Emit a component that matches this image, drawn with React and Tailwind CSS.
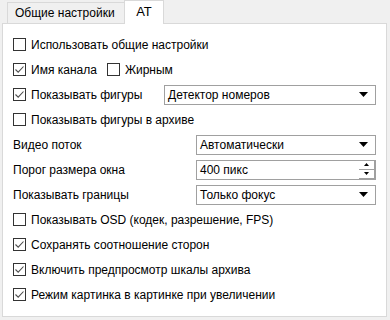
import React from 'react'

const font = { fontFamily: '"Segoe UI", "Liberation Sans", Arial, sans-serif' }

function Checkbox({ checked }) {
  return (
    <span className="flex h-[13px] w-[13px] shrink-0 items-center justify-center border border-[#333333] bg-white">
      {checked && (
        <svg width="11" height="11" viewBox="0 0 11 11">
          <path d="M1.5 5.5 L4.2 8.2 L9.5 2.5" fill="none" stroke="#4d4d4d" strokeWidth="1.1" />
        </svg>
      )}
    </span>
  )
}

function CheckRow({ checked, label, children }) {
  return (
    <div className="flex h-[25px] items-center">
      <Checkbox checked={checked} />
      <span className="ml-[5px]">{label}</span>
      {children}
    </div>
  )
}

function Arrow() {
  return (
    <svg width="9" height="5" viewBox="0 0 9 5" className="mr-[7px]">
      <path d="M0 0 H9 L4.5 5 Z" fill="#000" />
    </svg>
  )
}

function Select({ value, className = '' }) {
  return (
    <div className={`flex h-[20px] items-center justify-between border border-[#a0a0a0] bg-white pl-[3px] ${className}`}>
      <span>{value}</span>
      <Arrow />
    </div>
  )
}

function Spinner({ value }) {
  return (
    <div className="flex h-[20px] w-[180px] items-stretch border border-[#a0a0a0] bg-white">
      <span className="flex flex-1 items-center pl-[3px]">{value}</span>
      <div className="flex w-[16px] flex-col">
        <div className="flex flex-1 items-center justify-center border-b border-r border-[#a0a0a0]">
          <svg width="5" height="3" viewBox="0 0 5 3"><path d="M0 3 H5 L2.5 0 Z" fill="#000" /></svg>
        </div>
        <div className="flex flex-1 items-center justify-center border-b border-r border-[#a0a0a0]">
          <svg width="5" height="3" viewBox="0 0 5 3"><path d="M0 0 H5 L2.5 3 Z" fill="#000" /></svg>
        </div>
      </div>
    </div>
  )
}

function FieldRow({ label, children }) {
  return (
    <div className="flex h-[25px] items-center justify-between">
      <span>{label}</span>
      {children}
    </div>
  )
}

export default function App() {
  return (
    <div className="h-[320px] w-[390px] bg-[#f0f0f0] text-[12px] text-black" style={font}>
      <div className="flex h-[23px] items-end pl-[7px]">
        <div className="flex h-[21px] w-[117px] items-center border-l border-t border-[#d9d9d9] bg-[#f0f0f0] pl-[7px]">
          Общие настройки
        </div>
        <div className="relative z-10 -mb-px flex h-[24px] w-[40px] items-center justify-center border-x border-t border-[#d9d9d9] bg-white pb-[2px] text-[13px]">
          АТ
        </div>
      </div>
      <div className="ml-[2px] h-[294px] w-[385px] border border-[#d9d9d9] bg-white pl-[10px] pr-[10px] pt-[8px]">
        <CheckRow label="Использовать общие настройки" />
        <CheckRow checked label="Имя канала">
          <span className="ml-[10px]"><Checkbox /></span>
          <span className="ml-[5px]">Жирным</span>
        </CheckRow>
        <div className="flex h-[25px] items-center justify-between">
          <div className="flex items-center">
            <Checkbox checked />
            <span className="ml-[5px]">Показывать фигуры</span>
          </div>
          <Select value="Детектор номеров" className="w-[212px]" />
        </div>
        <CheckRow label="Показывать фигуры в архиве" />
        <FieldRow label="Видео поток">
          <Select value="Автоматически" className="w-[180px]" />
        </FieldRow>
        <FieldRow label="Порог размера окна">
          <Spinner value="400 пикс" />
        </FieldRow>
        <FieldRow label="Показывать границы">
          <Select value="Только фокус" className="w-[180px]" />
        </FieldRow>
        <CheckRow label="Показывать OSD (кодек, разрешение, FPS)" />
        <CheckRow checked label="Сохранять соотношение сторон" />
        <CheckRow checked label="Включить предпросмотр шкалы архива" />
        <CheckRow checked label="Режим картинка в картинке при увеличении" />
      </div>
    </div>
  )
}
